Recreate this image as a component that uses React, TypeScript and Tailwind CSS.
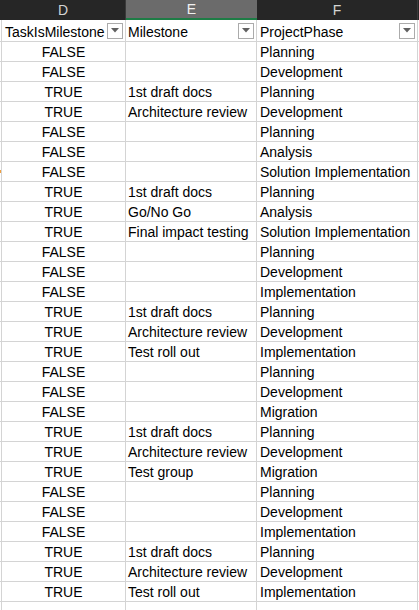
const rows: [string, string, string][] = [
  ["FALSE", "", "Planning"],
  ["FALSE", "", "Development"],
  ["TRUE", "1st draft docs", "Planning"],
  ["TRUE", "Architecture review", "Development"],
  ["FALSE", "", "Planning"],
  ["FALSE", "", "Analysis"],
  ["FALSE", "", "Solution Implementation"],
  ["TRUE", "1st draft docs", "Planning"],
  ["TRUE", "Go/No Go", "Analysis"],
  ["TRUE", "Final impact testing", "Solution Implementation"],
  ["FALSE", "", "Planning"],
  ["FALSE", "", "Development"],
  ["FALSE", "", "Implementation"],
  ["TRUE", "1st draft docs", "Planning"],
  ["TRUE", "Architecture review", "Development"],
  ["TRUE", "Test roll out", "Implementation"],
  ["FALSE", "", "Planning"],
  ["FALSE", "", "Development"],
  ["FALSE", "", "Migration"],
  ["TRUE", "1st draft docs", "Planning"],
  ["TRUE", "Architecture review", "Development"],
  ["TRUE", "Test group", "Migration"],
  ["FALSE", "", "Planning"],
  ["FALSE", "", "Development"],
  ["FALSE", "", "Implementation"],
  ["TRUE", "1st draft docs", "Planning"],
  ["TRUE", "Architecture review", "Development"],
  ["TRUE", "Test roll out", "Implementation"],
]

function FilterButton() {
  return (
    <div className="w-4 h-4 shrink-0 border border-[#ababab] bg-white flex items-center justify-center">
      <svg width="8" height="5" viewBox="0 0 8 5">
        <path d="M0 0 L8 0 L4 4.5 Z" fill="#606060" />
      </svg>
    </div>
  )
}

export default function App() {
  return (
    <div
      className="w-[419px] h-[610px] overflow-hidden bg-white text-[14px] text-black"
      style={{ fontFamily: '"Liberation Sans", Arial, sans-serif' }}
    >
      {/* column letters */}
      <div className="flex h-[20px] bg-[#262626] text-[#d4d4d4]">
        <div className="w-px" />
        <div className="w-[125px] flex items-center justify-center border-r border-[#3a3a3a]">D</div>
        <div className="w-[131px] flex items-center justify-center bg-[#6b6b6b] border-b-2 border-[#1d7c45] text-[#f0f0f0]">E</div>
        <div className="w-[161px] flex items-center justify-center border-r border-[#3a3a3a]">F</div>
      </div>

      {/* header row */}
      <div className="flex h-[22px] border-b border-[#d4d4d4]">
        <div className="w-px" />
        <div className="w-[125px] flex items-center justify-between pl-[3px] pr-[2px] border-x border-[#d4d4d4]">
          <span className="pt-[3px]">TaskIsMilestone</span>
          <FilterButton />
        </div>
        <div className="w-[131px] flex items-center justify-between pl-[2px] pr-[2px] border-r border-[#d4d4d4]">
          <span className="pt-[3px]">Milestone</span>
          <FilterButton />
        </div>
        <div className="w-[161px] flex items-center justify-between pl-[3px] pr-[2px] border-r border-[#d4d4d4]">
          <span className="pt-[3px]">ProjectPhase</span>
          <FilterButton />
        </div>
      </div>

      {rows.map((r, i) => (
        <div key={i} className="flex h-[20px] border-b border-[#d4d4d4]">
          <div className="w-px flex items-center">
            {i === 6 && <div className="w-px h-[3px] bg-[#f0a040]" />}
          </div>
          <div className="w-[125px] flex items-center justify-center pt-[2px] border-x border-[#d4d4d4] whitespace-nowrap">
            {r[0]}
          </div>
          <div className="w-[131px] flex items-center pl-[2px] pt-[2px] border-r border-[#d4d4d4] whitespace-nowrap">
            {r[1]}
          </div>
          <div className="w-[161px] flex items-center pl-[3px] pt-[2px] border-r border-[#d4d4d4] whitespace-nowrap">
            {r[2]}
          </div>
        </div>
      ))}

      <div className="flex h-[20px]">
        <div className="w-px" />
        <div className="w-[125px] border-x border-[#d4d4d4]" />
        <div className="w-[131px] border-r border-[#d4d4d4]" />
        <div className="w-[161px] border-r border-[#d4d4d4]" />
      </div>
    </div>
  )
}
